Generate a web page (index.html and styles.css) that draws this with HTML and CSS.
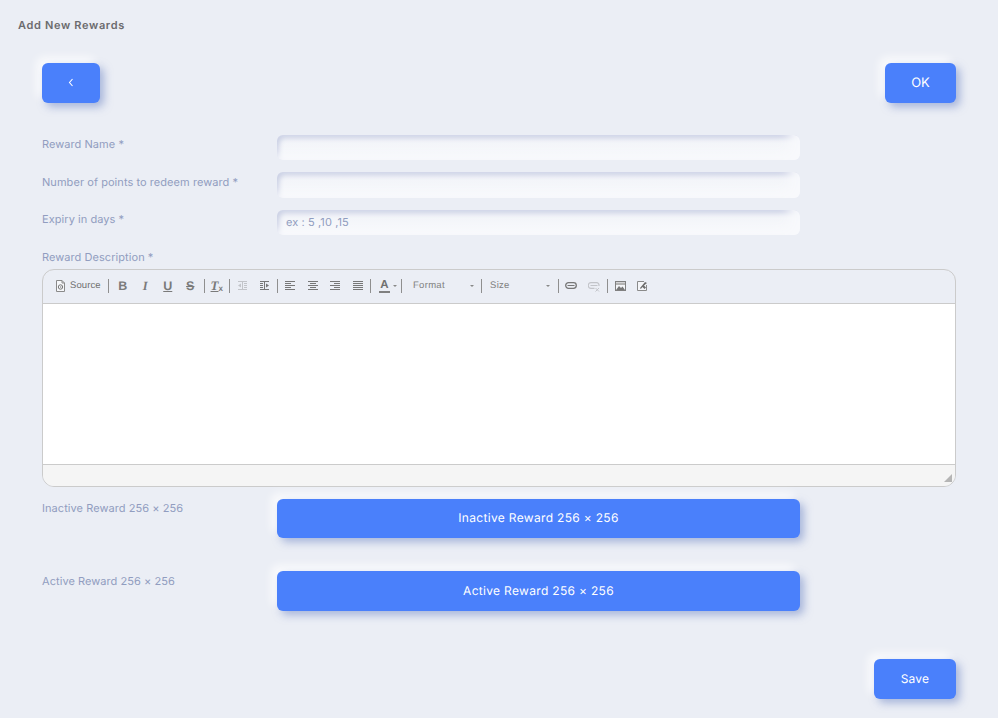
FILE: index.html
```html
<!DOCTYPE html>
<html lang="en">
<head>
<meta charset="utf-8">
<title>Add New Rewards</title>
<link rel="stylesheet" href="styles.css">
</head>
<body>
<svg class="defs" width="0" height="0" aria-hidden="true">
  <symbol id="i-source" viewBox="0 0 11 12"><path d="M1.500.5h5.500l2.500 2.500v8.500h-8z" fill="#f6f7fa" stroke="#8a8a8a" stroke-width="1"/><path d="M7 .5v2.500h2.500" fill="none" stroke="#8a8a8a"/><circle cx="5.500" cy="7" r="2.200" fill="none" stroke="#777" stroke-width="1"/><path d="M4.700 7l1.500-1v2z" fill="#777"/></symbol>
  <symbol id="i-outdent" viewBox="0 0 11 10"><path d="M1 .5h9M7 2.500h3M7 4.500h3M7 6.500h3M1 8.500h9M5.500 1v8" stroke="currentColor" fill="none"/><path d="M1 4.500l3-2v4z" fill="currentColor"/></symbol>
  <symbol id="i-indent" viewBox="0 0 11 10"><path d="M1 .5h9M1 2.500h3M1 4.500h3M1 6.500h3M1 8.500h9M5.500 1v8" stroke="currentColor" fill="none"/><path d="M10 4.500l-3-2v4z" fill="currentColor"/></symbol>
  <symbol id="i-left" viewBox="0 0 10 9"><path d="M0 .5h10M0 2.500h6M0 4.500h10M0 6.500h6M0 8.500h10" stroke="currentColor" fill="none"/></symbol>
  <symbol id="i-center" viewBox="0 0 10 9"><path d="M0 .5h10M2 2.500h6M0 4.500h10M2 6.500h6M0 8.500h10" stroke="currentColor" fill="none"/></symbol>
  <symbol id="i-right" viewBox="0 0 10 9"><path d="M0 .5h10M4 2.500h6M0 4.500h10M4 6.500h6M0 8.500h10" stroke="currentColor" fill="none"/></symbol>
  <symbol id="i-justify" viewBox="0 0 10 9"><path d="M0 .5h10M0 2.500h10M0 4.500h10M0 6.500h10M0 8.500h10" stroke="currentColor" fill="none"/></symbol>
  <symbol id="i-link" viewBox="0 0 12 7"><rect x=".7" y=".7" width="10.600" height="5.600" rx="2.800" fill="none" stroke="currentColor" stroke-width="1.300"/><path d="M2.500 3.500h7" stroke="currentColor"/></symbol>
  <symbol id="i-unlink" viewBox="0 0 12 10"><path d="M11 4V3A2.300 2.300 0 0 0 8.700.7H3a2.800 2.800 0 0 0 0 5.600h3.500" fill="none" stroke="currentColor" stroke-width="1.200"/><path d="M2.500 3.500h7M7.500 6l3.500 3.500M11 6L7.500 9.500" stroke="currentColor" fill="none"/></symbol>
  <symbol id="i-image" viewBox="0 0 11 10"><rect x=".5" y=".5" width="10" height="9" fill="#f4f5f8" stroke="#808080"/><path d="M1 1.500h9v2.500H1z" fill="#b4b4b4"/><path d="M1 9l3-4 2 2 1.500-1.500L10 9z" fill="#777"/></symbol>
  <symbol id="i-anchor" viewBox="0 0 11 11"><path d="M9.500 5v5.500h-9v-9H7" fill="#f4f5f8" stroke="#8a8a8a"/><path d="M3 8l5-6 2 1-3 2.500 2 2-1.500 1.500-2-2L3.800 9z" fill="#6e6e6e"/></symbol>
</svg>

<main class="page">
  <h1 class="title">Add New Rewards</h1>

  <div class="content">
    <div class="topbar">
      <button class="btn btn-back" type="button" aria-label="Back">
        <svg width="6" height="9" viewBox="0 0 6 9"><path d="M4.500 1L1.500 4.500 4.500 8" fill="none" stroke="#fff" stroke-width="1.100"/></svg>
      </button>
      <button class="btn btn-ok" type="button">OK</button>
    </div>

    <div class="field field-first">
      <label class="label">Reward Name *</label>
      <input class="input" type="text">
    </div>
    <div class="field field-second">
      <label class="label label-low">Number of points to redeem reward *</label>
      <input class="input input-tall" type="text">
    </div>
    <div class="field field-third">
      <label class="label">Expiry in days *</label>
      <input class="input input-hint" type="text" placeholder="ex : 5 ,10 ,15">
    </div>

    <div class="label label-desc">Reward Description *</div>

    <div class="editor">
      <div class="toolbar">
        <span class="tool-source"><svg class="ic-source"><use href="#i-source"/></svg>Source</span>
        <i class="sep sep-a"></i>
        <span class="tool"><b class="glyph">B</b></span>
        <span class="tool"><em class="glyph glyph-i">I</em></span>
        <span class="tool"><u class="glyph">U</u></span>
        <span class="tool"><s class="glyph">S</s></span>
        <i class="sep sep-b"></i>
        <span class="tool"><span class="glyph-tx"><em>T</em><sub>x</sub></span></span>
        <i class="sep sep-c"></i>
        <span class="tool tool-off"><svg class="ic-11"><use href="#i-outdent"/></svg></span>
        <span class="tool"><svg class="ic-11"><use href="#i-indent"/></svg></span>
        <i class="sep sep-c"></i>
        <span class="tool"><svg class="ic-10"><use href="#i-left"/></svg></span>
        <span class="tool"><svg class="ic-10"><use href="#i-center"/></svg></span>
        <span class="tool"><svg class="ic-10"><use href="#i-right"/></svg></span>
        <span class="tool"><svg class="ic-10"><use href="#i-justify"/></svg></span>
        <i class="sep sep-c"></i>
        <span class="tool-color"><span class="glyph-a">A</span><i class="caret"></i></span>
        <i class="sep sep-d"></i>
        <span class="combo combo-format">Format<i class="caret"></i></span>
        <i class="sep sep-e"></i>
        <span class="combo combo-size">Size<i class="caret"></i></span>
        <i class="sep sep-c"></i>
        <span class="tool"><svg class="ic-link"><use href="#i-link"/></svg></span>
        <span class="tool tool-off"><svg class="ic-unlink"><use href="#i-unlink"/></svg></span>
        <i class="sep sep-f"></i>
        <span class="tool"><svg class="ic-11"><use href="#i-image"/></svg></span>
        <span class="tool"><svg class="ic-anchor"><use href="#i-anchor"/></svg></span>
      </div>
      <div class="editor-body"></div>
      <div class="editor-foot"><i class="resizer"></i></div>
    </div>

    <div class="upload upload-first">
      <div class="label">Inactive Reward 256 × 256</div>
      <button class="btn btn-upload" type="button">Inactive Reward 256 × 256</button>
    </div>
    <div class="upload upload-second">
      <div class="label label-low">Active Reward 256 × 256</div>
      <button class="btn btn-upload btn-upload-tall" type="button">Active Reward 256 × 256</button>
    </div>

    <div class="actions">
      <button class="btn btn-save" type="button">Save</button>
    </div>
  </div>
</main>
</body>
</html>
```
FILE: styles.css
```css
* { box-sizing: border-box; }
html, body { margin: 0; padding: 0; }
body {
  background: #ebeef5;
  font-family: Inter, "Liberation Sans", sans-serif;
  height: 718px;
  overflow: hidden;
  text-rendering: geometricPrecision;
}
.defs { position: absolute; }
.page { padding: 18px 42px 0 18px; }
.title {
  margin: 0;
  font-size: 11px;
  line-height: 14px;
  font-weight: 600;
  letter-spacing: 0.66px;
  color: #6b6b6e;
}
.content { padding-left: 24px; }
.topbar {
  display: flex;
  justify-content: space-between;
  margin-top: 31px;
}
.btn {
  border: 0;
  padding: 0 0 1px;
  background: #4a80fb;
  color: #fff;
  font-family: inherit;
  text-rendering: geometricPrecision;
  border-radius: 6px;
  box-shadow: 4px 4px 9px rgba(120, 142, 200, 0.6), -5px -5px 10px rgba(255, 255, 255, 0.9);
  display: flex;
  align-items: center;
  justify-content: center;
}
.btn-back { width: 58px; height: 40px; }
.btn-ok { width: 71px; height: 40px; font-size: 13px; }
.field { display: flex; align-items: flex-start; }
.field-first { margin-top: 32px; }
.field-second { margin-top: 12px; }
.field-third { margin-top: 12px; }
.label {
  font-size: 11px;
  line-height: 14px;
  letter-spacing: 0.06px;
  color: #919dc0;
}
.field .label, .upload .label { width: 235px; flex: none; margin-top: 2px; }
.field .label-low, .upload .label-low { margin-top: 3px; }
.input {
  width: 523px;
  height: 25px;
  border: 0;
  outline: 0;
  padding: 0 9px;
  border-radius: 6px;
  background: linear-gradient(#f1f3f8, #f8f9fc);
  box-shadow: inset -10px -5px 12px #f8f9fc, inset 2px 3px 5px #c6cce2;
  font-family: inherit;
  text-rendering: geometricPrecision;
  font-size: 11px;
  letter-spacing: 0.1px;
  color: #919dc0;
}
.input-hint { padding-bottom: 2px; }
.input::placeholder { color: #919dc0; opacity: 1; }
.input-tall { height: 26px; }
.label-desc { margin-top: 15px; }
.editor {
  margin-top: 5px;
  width: 914px;
  height: 218px;
  border: 1px solid #cbcbcb;
  border-radius: 12px;
  overflow: hidden;
  display: flex;
  flex-direction: column;
}
.toolbar {
  height: 34px;
  flex: none;
  display: flex;
  align-items: center;
  padding: 0 0 2px 12px;
  border-bottom: 1px solid #cbcbcb;
  color: #777;
}
.tool-source {
  display: flex;
  align-items: center;
  gap: 4px;
  font-family: "Liberation Sans", Arial, sans-serif;
  font-size: 9.5px;
  width: 46px;
  color: #707070;
  letter-spacing: 0.1px;
}
.ic-source { width: 11px; height: 12px; flex: none; }
.sep { display: block; width: 1px; height: 14px; background: #8f8f8f; flex: none; }
.sep-a { margin: 0 2.500px 0 7px; }
.sep-b { margin: 0 1px 0 2px; }
.sep-c { margin: 0 1px; }
.sep-d { margin: 0 0 0 4px; }
.sep-e { margin: 0; }
.sep-f { margin: 0 1px 0 2px; }
.tool {
  width: 22.500px;
  height: 16px;
  flex: none;
  display: flex;
  align-items: center;
  justify-content: center;
  color: #777;
}
.tool-off { color: #c2c4c9; }
.glyph {
  font-family: "Liberation Sans", Arial, sans-serif;
  font-size: 12.500px;
  line-height: 14px;
  font-weight: 700;
  color: #7a7a7a;
}
.glyph-i { font-style: italic; font-family: "Liberation Serif", serif; font-weight: 700; }
.glyph-tx {
  font-family: "Liberation Serif", serif;
  font-weight: 700;
  font-size: 13px;
  line-height: 14px;
  color: #7a7a7a;
  display: flex;
  align-items: flex-end;
}
.glyph-tx em { text-decoration: underline; }
.glyph-tx sub { font-size: 8px; line-height: 8px; font-family: "Liberation Sans", Arial, sans-serif; vertical-align: baseline; }
.ic-11 { width: 11px; height: 10px; }
.ic-10 { width: 10px; height: 9px; }
.ic-link { width: 12px; height: 7px; }
.ic-unlink { width: 12px; height: 10px; margin-top: 2px; }
.ic-anchor { width: 11px; height: 11px; }
.tool-color {
  width: 25px;
  padding-left: 7px;
  flex: none;
  display: flex;
  align-items: center;
  gap: 3px;
}
.glyph-a {
  font-family: "Liberation Sans", Arial, sans-serif;
  font-weight: 700;
  font-size: 11.500px;
  line-height: 12px;
  color: #707070;
  border-bottom: 2px solid #808080;
  width: 11px;
  text-align: center;
}
.caret {
  display: block;
  width: 0;
  height: 0;
  border-left: 2.500px solid transparent;
  border-right: 2.500px solid transparent;
  border-top: 2.500px solid #888;
  flex: none;
}
.combo {
  display: flex;
  align-items: center;
  justify-content: space-between;
  flex: none;
  font-family: "Liberation Sans", Arial, sans-serif;
  font-size: 9.500px;
  letter-spacing: 0.3px;
  color: #808080;
  height: 16px;
}
.combo-format { width: 79px; padding: 0 7px 0 11px; }
.combo-size { width: 75px; padding: 0 7px 0 8px; }
.editor-body { height: 160px; background: #fff; flex: none; }
.editor-foot {
  flex: 1;
  background: #f5f5f5;
  border-top: 1px solid #cbcbcb;
  display: flex;
  justify-content: flex-end;
  align-items: flex-end;
  padding: 0 3px 4px 0;
}
.resizer {
  display: block;
  width: 0;
  height: 0;
  border-style: solid;
  border-width: 0 0 8px 8px;
  border-color: transparent transparent #b5b5b5 transparent;
}
.upload { display: flex; align-items: flex-start; }
.upload-first { margin-top: 12px; }
.upload-second { margin-top: 33px; }
.btn-upload { width: 523px; height: 39px; padding-bottom: 2px; font-size: 12px; letter-spacing: 0.32px; }
.btn-upload-tall { height: 40px; padding-bottom: 1px; }
.actions { display: flex; justify-content: flex-end; margin-top: 48px; }
.btn-save { width: 82px; height: 40px; padding-bottom: 2px; font-size: 12px; letter-spacing: 0.2px; }
```
